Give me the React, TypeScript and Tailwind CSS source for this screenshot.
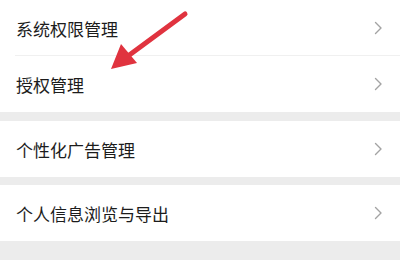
import React from "react";

const Chevron = () => (
  <svg width="9" height="14" viewBox="0 0 9 14" fill="none">
    <path d="M1.5 1.5 L7 7 L1.5 12.5" stroke="#a3a3a3" strokeWidth="1.4" strokeLinecap="round" strokeLinejoin="round" />
  </svg>
);

function Row({ label, divider }: { label: string; divider?: boolean }) {
  return (
    <div className="relative flex h-[56px] items-center justify-between bg-white pl-[16px] pr-[17px]">
      <span className="text-[17px] leading-none text-[#1c1c1c]">{label}</span>
      <Chevron />
      {divider && <div className="absolute bottom-0 left-[15px] right-0 h-px bg-[#f0f0f0]" />}
    </div>
  );
}

export default function App() {
  return (
    <div
      className="relative h-[260px] w-[400px] overflow-hidden bg-[#ececec]"
      style={{ fontFamily: '"Noto Sans CJK SC", "Noto Sans", sans-serif' }}
    >
      <div className="flex flex-col">
        <Row label="系统权限管理" divider />
        <Row label="授权管理" />
        <div className="h-[9px]" />
        <Row label="个性化广告管理" />
        <div className="h-[8px]" />
        <Row label="个人信息浏览与导出" />
      </div>
      <svg className="absolute left-0 top-0" width="400" height="260" viewBox="0 0 400 260">
        <line x1="185" y1="14" x2="128" y2="56" stroke="#e0333f" strokeWidth="5" strokeLinecap="round" />
        <polygon points="111,69 121,44 137,63" fill="#e0333f" />
      </svg>
    </div>
  );
}
